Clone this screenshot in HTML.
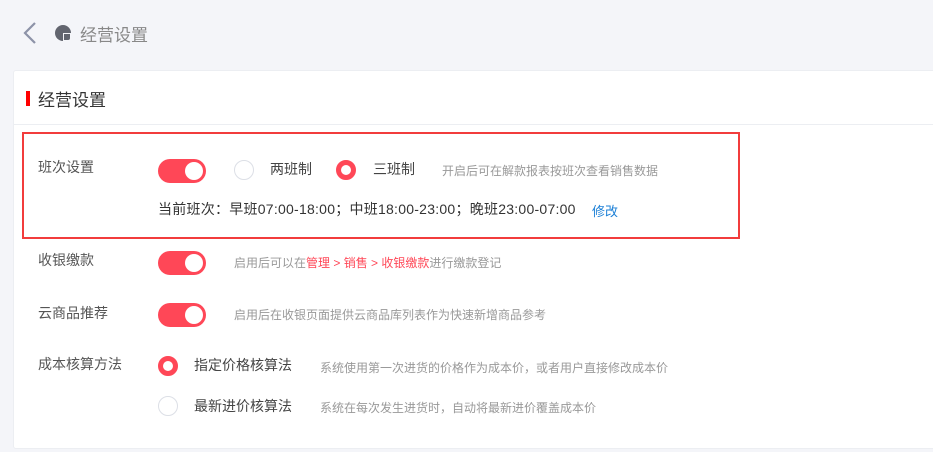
<!DOCTYPE html>
<html><head><meta charset="utf-8"><style>
*{margin:0;padding:0;box-sizing:border-box}
body{width:933px;height:452px;background:#f4f5f9;font-family:"Liberation Sans","Noto Sans CJK SC",sans-serif;position:relative;overflow:hidden;color:#555}
.a{position:absolute;white-space:nowrap}
.card{position:absolute;left:13px;top:70px;width:930px;height:379px;background:#fff;border:1px solid #eceef2;border-radius:3px}
.tg{position:absolute;width:48px;height:24px;border-radius:12px;background:#ff4757}
.tg::after{content:"";position:absolute;right:3px;top:3px;width:18px;height:18px;border-radius:50%;background:#fff}
.r{position:absolute;width:20px;height:20px;border-radius:50%;border:1px solid #dcdfe6;background:#fff}
.r.on{border:5px solid #ff4757}
.l{font-size:14px;color:#555}
.h{font-size:12px;color:#999}
.o{font-size:14px;color:#444}
</style></head><body>
<svg class="a" style="left:20px;top:21px" width="18" height="24"><path d="M15 2 L5 12 L15 22" fill="none" stroke="#8d93a8" stroke-width="2.2"/></svg>
<div class="a" style="left:55px;top:25px;width:16px;height:16px;border-radius:50%;background:#62656f"></div>
<div class="a" style="left:63px;top:33px;width:9px;height:9px;background:#f4f5f9"></div>
<div class="a" style="left:64px;top:34px;width:6px;height:6px;background:#62656f;border-radius:0 0 2px 0"></div>
<div class="a" style="left:80px;top:21px;font-size:17px;color:#888">经营设置</div>
<div class="card"></div>
<div class="a" style="left:13px;top:124px;width:920px;height:1px;background:#eceef2"></div>
<div class="a" style="left:26px;top:91px;width:4px;height:15px;background:#f00"></div>
<div class="a" style="left:38px;top:86px;font-size:17px;color:#333">经营设置</div>
<div class="a" style="left:22px;top:132px;width:718px;height:107px;border:2px solid #f23c3c"></div>
<div class="a l" style="left:38px;top:157px">班次设置</div>
<div class="tg" style="left:158px;top:159px"></div>
<div class="r" style="left:234px;top:160px"></div>
<div class="a o" style="left:270px;top:159px">两班制</div>
<div class="r on" style="left:336px;top:160px"></div>
<div class="a o" style="left:373px;top:159px">三班制</div>
<div class="a h" style="left:442px;top:162px">开启后可在解款报表按班次查看销售数据</div>
<div class="a" style="left:158px;top:199px;font-size:14px;color:#333;letter-spacing:0.25px">当前班次：早班07:00-18:00；中班18:00-23:00；晚班23:00-07:00</div>
<div class="a" style="left:592px;top:201px;font-size:13px;color:#1b7fd6">修改</div>
<div class="a l" style="left:38px;top:250px">收银缴款</div>
<div class="tg" style="left:158px;top:251px"></div>
<div class="a h" style="left:234px;top:254px">启用后可以在<span style="color:#ff4757">管理 &gt; 销售 &gt; 收银缴款</span>进行缴款登记</div>
<div class="a l" style="left:38px;top:303px">云商品推荐</div>
<div class="tg" style="left:158px;top:303px"></div>
<div class="a h" style="left:234px;top:306px">启用后在收银页面提供云商品库列表作为快速新增商品参考</div>
<div class="a l" style="left:38px;top:354px">成本核算方法</div>
<div class="r on" style="left:158px;top:356px"></div>
<div class="a o" style="left:194px;top:355px">指定价格核算法</div>
<div class="a h" style="left:320px;top:359px">系统使用第一次进货的价格作为成本价，或者用户直接修改成本价</div>
<div class="r" style="left:158px;top:396px"></div>
<div class="a o" style="left:194px;top:396px">最新进价核算法</div>
<div class="a h" style="left:320px;top:399px">系统在每次发生进货时，自动将最新进价覆盖成本价</div>
</body></html>
